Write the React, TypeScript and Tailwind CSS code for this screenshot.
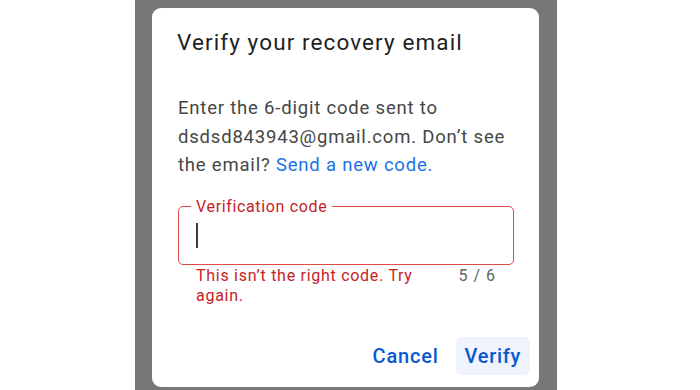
export default function App() {
  return (
    <div className="h-[390px] w-[700px] bg-white font-['Roboto',sans-serif]">
      <div className="ml-[135px] h-full w-[422px] bg-[#777777] pt-[8px] pl-[17px]">
        <div className="flex h-[379px] w-[387px] flex-col rounded-[9px] bg-white">
          <h1 className="pl-[25px] pt-[20px] text-[22.5px] leading-[28px] tracking-[1.1px] text-[#1f1f1f]">
            Verify your recovery email
          </h1>

          <p className="mt-[38px] pl-[26px] text-[18.5px] leading-[28.5px] tracking-[0.8px] whitespace-nowrap text-[#444746]">
            Enter the 6-digit code sent to
            <br />
            dsdsd843943@gmail.com. Don’t see
            <br />
            the email? <span className="text-[#1a73e8]">Send a new code.</span>
          </p>

          <fieldset className="ml-[26px] mt-[17px] w-[336px] rounded-[5px] border border-[#dc4b45] pb-[16px]">
            <legend className="ml-[12px] px-[5px] text-[16px] leading-[20px] tracking-[0.65px] text-[#c5221f]">
              Verification code
            </legend>
            <div className="ml-[17px] mt-[6px] h-[25px] w-[1.5px] bg-[#3c4043]" />
          </fieldset>

          <div className="flex pl-[44px] pr-[43px] pt-[1px] text-[16px] leading-[20px] tracking-[0.72px]">
            <span className="w-[235px] text-[#c5221f]">
              This isn’t the right code. Try
              <br />
              again.
            </span>
            <span className="ml-auto tracking-[1px] text-[#5f6368]">5 / 6</span>
          </div>

          <div className="mt-auto flex justify-end gap-[8px] pb-[12px] pr-[9px]">
            <button className="h-[38px] rounded-[5px] px-[9px] text-[20px] font-medium tracking-[0.8px] text-[#0b57d0]">
              Cancel
            </button>
            <button className="h-[38px] rounded-[5px] bg-[#eef3fd] px-[9px] text-[20px] font-medium tracking-[0.7px] text-[#0b57d0]">
              Verify
            </button>
          </div>
        </div>
      </div>
    </div>
  );
}
